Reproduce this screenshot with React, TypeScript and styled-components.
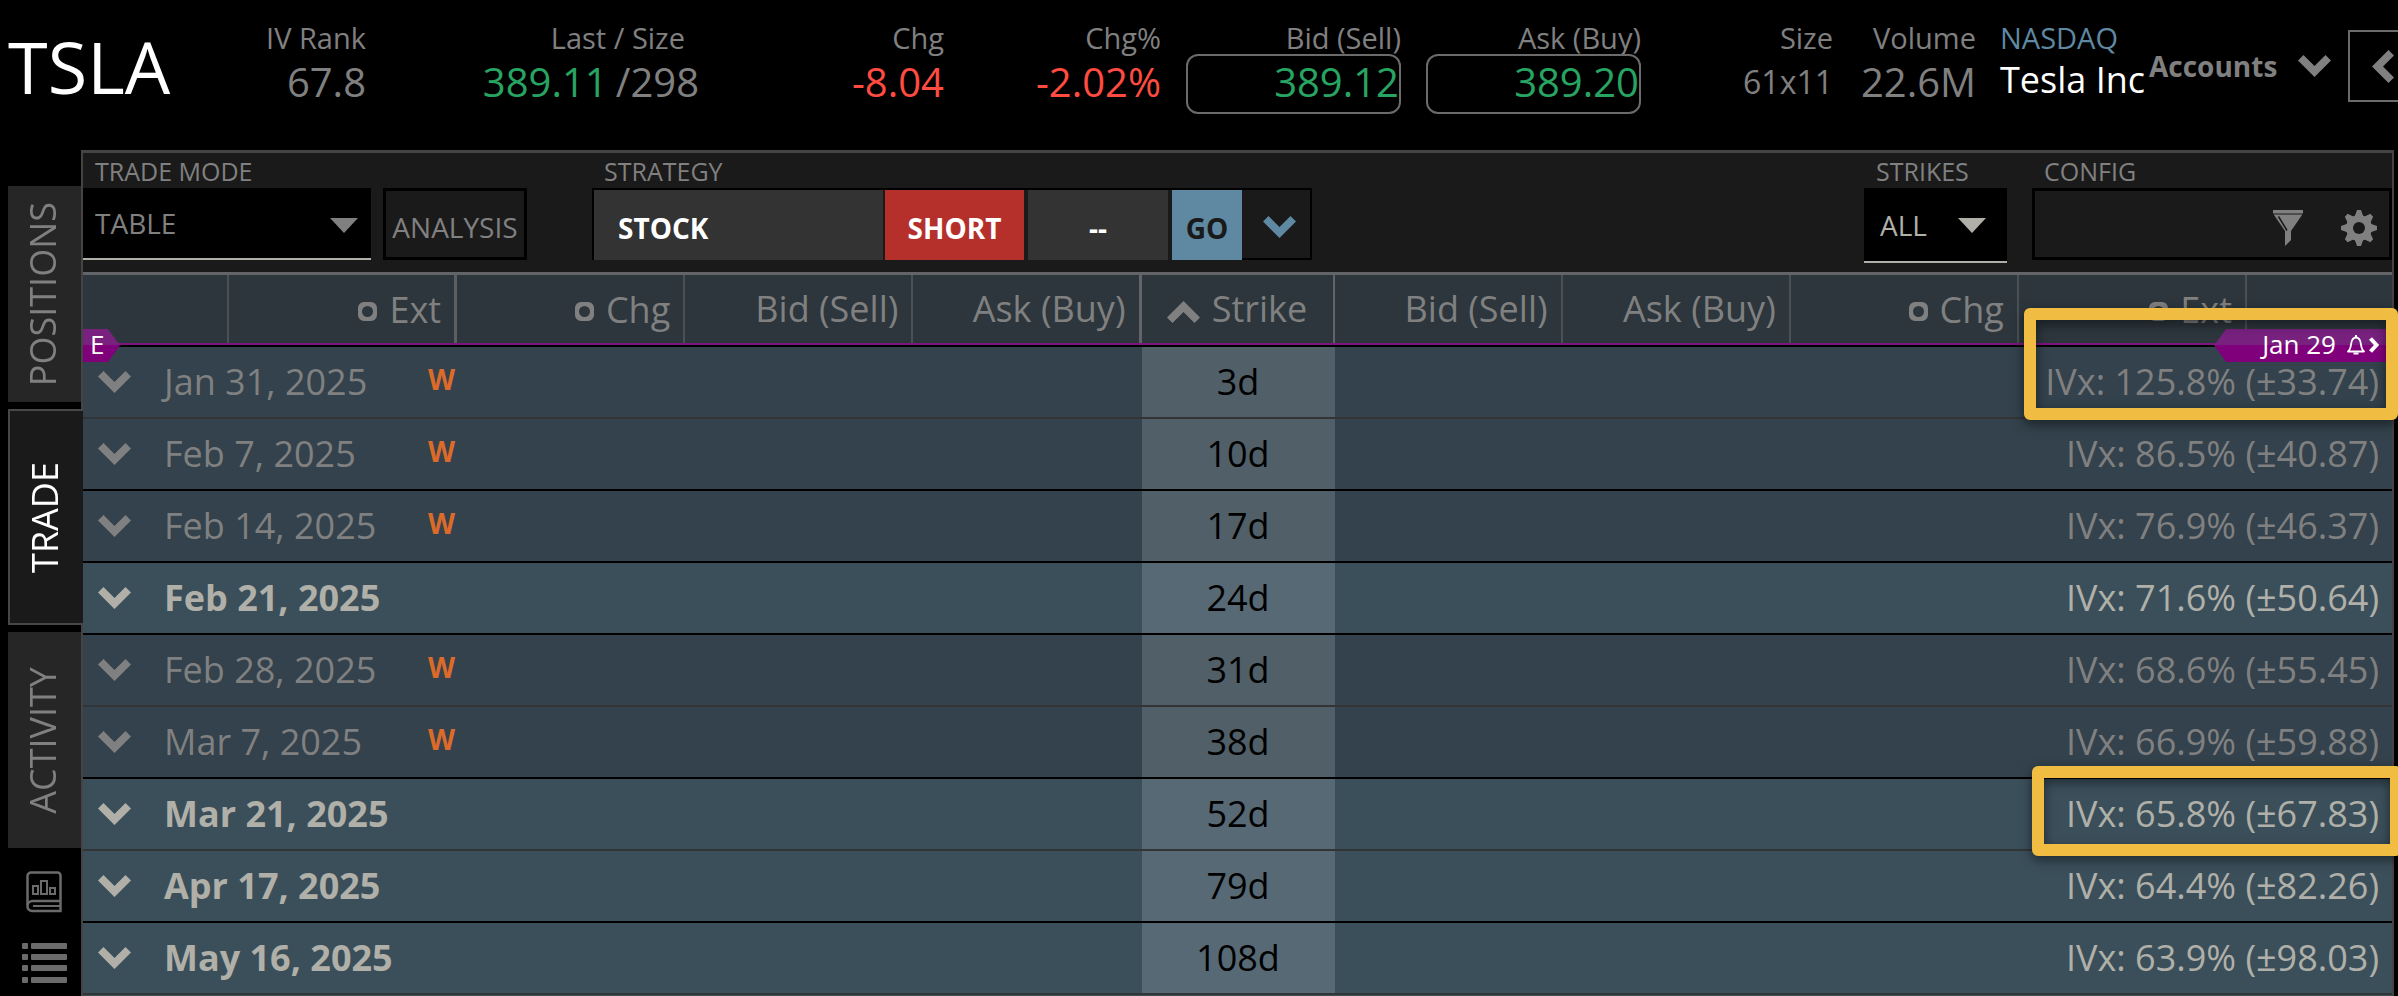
import React from "react";
import styled, { createGlobalStyle, css } from "styled-components";

const GlobalStyle = createGlobalStyle`
  *, *::before, *::after { box-sizing: border-box; }
  body {
    margin: 0;
    background: #000;
    color: #808080;
    font-family: "Open Sans", "Noto Sans", sans-serif;
    overflow: hidden;
  }
  button, select {
    margin: 0;
    padding: 0;
    border: 0;
    border-radius: 0;
    background: none;
    color: inherit;
    font: inherit;
    cursor: pointer;
  }
  svg { display: block; flex: none; }
`;

const GREY = "#808080";
const GREEN = "#28a462";
const RED = "#ff4b40";
const BLUE = "#5f88a2";
const PALE = "#b0b0a9";

/* ---------- page ---------- */

const Page = styled.div`
  display: flex;
  flex-direction: column;
  height: 100vh;
  overflow: hidden;
`;

const Workspace = styled.div`
  display: flex;
  flex: 1;
  min-height: 0;
  padding-right: 4px;
`;

/* ---------- quote header ---------- */

const QuoteBar = styled.header`
  display: grid;
  grid-template-columns: 163fr 195fr 333fr 245fr 217fr 240fr 240fr 192fr 143fr 173fr 199fr 50fr;
  height: 150px;
  padding-left: 8px;
  flex: none;
`;

const Symbol = styled.h1`
  margin: 0;
  padding-top: 17px;
  color: #fff;
  font-size: 72px;
  line-height: 98px;
  font-weight: 400;
`;

const Quote = styled.div<{ $left?: boolean }>`
  display: flex;
  flex-direction: column;
  align-items: ${(p) => (p.$left ? "flex-start" : "flex-end")};
  min-width: 0;
  padding-top: 19px;
  padding-left: ${(p) => (p.$left ? 24 : 0)}px;
  white-space: nowrap;
`;

const QuoteLabel = styled.div<{ $color?: string; $inset?: boolean }>`
  height: 35px;
  padding-right: ${(p) => (p.$inset ? 14 : 0)}px;
  color: ${(p) => p.$color ?? GREY};
  font-size: 29px;
  line-height: 38px;
`;

const QuoteValue = styled.div<{ $color?: string; $size?: number }>`
  display: flex;
  gap: 8px;
  padding-top: 2px;
  color: ${(p) => p.$color ?? GREY};
  font-size: ${(p) => p.$size ?? 40}px;
  line-height: ${(p) => (p.$size === 36 ? 48 : 52)}px;
`;

const Up = styled.span`
  color: ${GREEN};
`;

const PriceButton = styled.button`
  display: flex;
  justify-content: flex-end;
  width: calc(100% - 25px);
  height: 60px;
  border: 2px solid #6b6b6b;
  border-radius: 12px;
  color: ${GREEN};
  font-size: 40px;
  line-height: 52px;
`;

const AccountsButton = styled.button`
  display: flex;
  align-items: center;
  justify-content: space-between;
  min-width: 0;
  height: 72px;
  margin-top: 30px;
  padding: 0 17px 0 0;
  font-size: 28px;
  font-weight: 700;
`;

const CollapseButton = styled.button`
  display: flex;
  align-items: center;
  min-width: 0;
  height: 72px;
  margin-top: 30px;
  padding-left: 22px;
  border: 2px solid #6b6b6b;
  border-right: 0;
  overflow: hidden;
`;

/* ---------- side tabs ---------- */

const Side = styled.nav`
  display: flex;
  flex-direction: column;
  flex: none;
  gap: 7px;
  width: 81px;
  padding: 36px 0 0 8px;
`;

const SideTab = styled.button<{ $active?: boolean }>`
  display: flex;
  align-items: center;
  justify-content: center;
  flex: none;
  height: 216px;
  padding-right: 4px;
  background: #262626;
  font-size: 36px;
  line-height: 48px;
  ${(p) =>
    p.$active &&
    css`
      z-index: 1;
      margin-right: -2px;
      border: 2px solid #474747;
      border-right: 0;
      background: #1a1a1a;
      color: #fff;
    `}
`;

const Upright = styled.span`
  writing-mode: vertical-rl;
  transform: rotate(180deg);
`;

const SideTools = styled.div`
  display: flex;
  flex-direction: column;
  align-items: center;
  gap: 30px;
  padding: 16px 0 0;
  margin-right: 1px;
  color: #6b6b6b;
`;

/* ---------- trade panel ---------- */

const Panel = styled.main`
  display: flex;
  flex-direction: column;
  flex: 1;
  min-width: 0;
  border: 2px solid #444;
  border-top-width: 3px;
  border-bottom: 0;
  background: #3b4f5b;
`;

const Toolbar = styled.div`
  display: flex;
  flex: none;
  height: 119px;
  background: #1a1a1a;
`;

const Field = styled.div<{ $before?: number; $push?: boolean; $width: number }>`
  flex: none;
  width: ${(p) => p.$width}px;
  margin-left: ${(p) => (p.$push ? "auto" : `${p.$before ?? 0}px`)};
`;

const FieldLabel = styled.label`
  display: block;
  height: 35px;
  padding-left: 12px;
  font-size: 25px;
  line-height: 36px;
`;

const SelectBox = styled.div<{ $pale?: boolean }>`
  display: flex;
  position: relative;
  height: ${(p) => (p.$pale ? 75 : 72)}px;
  color: ${(p) => (p.$pale ? PALE : GREY)};

  select {
    appearance: none;
    width: 100%;
    height: 100%;
    padding-left: ${(p) => (p.$pale ? 16 : 12)}px;
    border-bottom: 2px solid ${PALE};
    background: #000;
    font-size: 28px;
  }
  svg {
    position: absolute;
    right: ${(p) => (p.$pale ? 21 : 13)}px;
    top: 30px;
    pointer-events: none;
  }
`;

const FrameButton = styled.button`
  display: flex;
  align-items: center;
  justify-content: center;
  width: 100%;
  height: 72px;
  margin-top: 35px;
  padding-top: 5px;
  border: 3px solid #000;
  font-size: 28px;
`;

const StrategyBox = styled.div`
  display: grid;
  grid-template-columns: 291px 143px 144px 70px 1fr;
  height: 72px;
  border: 2px solid #000;
  border-bottom-width: 0;
`;

const StrategyPart = styled.button<{ $bg?: string; $ink?: string; $start?: boolean; $gap?: number }>`
  display: flex;
  align-items: center;
  justify-content: ${(p) => (p.$start ? "flex-start" : "center")};
  margin-right: ${(p) => p.$gap ?? 0}px;
  padding: ${(p) => (p.$start ? "5px 0 0 24px" : "5px 0 0")};
  background: ${(p) => p.$bg ?? "#333"};
  color: ${(p) => p.$ink ?? "#fff"};
  font-size: 28px;
  font-weight: 700;
`;

const StrategyMore = styled.button`
  display: flex;
  align-items: center;
  justify-content: center;
  padding: 6px 0 0 6px;
  border-bottom: 2px solid #000;
  color: ${BLUE};
`;

const ConfigBox = styled.div`
  display: flex;
  align-items: center;
  justify-content: flex-end;
  gap: 38px;
  height: 72px;
  padding: 8px 12px 0 0;
  border: 3px solid #000;
`;

/* ---------- option chain ---------- */

const Chain = styled.table`
  width: 100%;
  flex: none;
  table-layout: fixed;
  border-collapse: separate;
  border-spacing: 0;
  border-top: 3px solid #626467;
  font-size: 36px;
  line-height: 48px;
`;

const Column = styled.col<{ $width?: number }>`
  width: ${(p) => (p.$width ? `${p.$width}px` : "auto")};
`;

const HeadCell = styled.th<{ $line?: string; $thick?: boolean; $center?: boolean }>`
  position: relative;
  height: 72px;
  padding: 0 13px 4px 0;
  border-right: ${(p) => (p.$thick ? 3 : 2)}px solid ${(p) => p.$line ?? "#4b5054"};
  background: #2c363c;
  font-weight: 400;
  text-align: right;
  white-space: nowrap;
  ${(p) =>
    p.$center &&
    css`
      padding-right: 0;
      text-align: center;
    `}
  &:last-child { border-right: 0; }
  &::after {
    content: "";
    position: absolute;
    left: 0;
    right: -3px;
    bottom: 0;
    height: 4px;
    background: linear-gradient(#7d1580 2px, #000 2px);
  }
  &:last-child::after { right: 0; }
`;

const HeadLabel = styled.span`
  display: inline-flex;
  align-items: center;
  gap: 12px;
`;

const ExpiryRow = styled.tr<{ $monthly?: boolean; $dark?: boolean }>`
  color: ${(p) => (p.$monthly ? PALE : GREY)};
  td {
    position: relative;
    height: 72px;
    padding: 0;
    border-bottom: 2px solid ${(p) => (p.$dark ? "#000" : "#333436")};
    background: ${(p) => (p.$monthly ? "#3b4f5b" : "#33424c")};
  }
  td:nth-child(2) {
    background: ${(p) => (p.$monthly ? "#576974" : "#515f68")};
    color: #000;
    text-align: center;
  }
`;

const Expiry = styled.button<{ $monthly?: boolean }>`
  display: grid;
  grid-template-columns: 66px 264px auto;
  align-items: center;
  width: 100%;
  padding-left: 15px;
  font-weight: ${(p) => (p.$monthly ? 700 : 400)};
  line-height: 48px;
  text-align: left;
`;

const Weekly = styled.span`
  padding-bottom: 6px;
  color: #dc6b2b;
  font-size: 28px;
  font-weight: 700;
  line-height: 36px;
`;

const Volatility = styled.div`
  padding-right: 13px;
  text-align: right;
`;

const Marker = styled.span<{ $right?: boolean }>`
  position: absolute;
  z-index: 2;
  bottom: -15px;
  display: flex;
  align-items: center;
  height: 33px;
  background: linear-gradient(#78217f 16px, #80007b 16px);
  color: #fff;
  font-size: 26px;
  line-height: 31px;
  padding-bottom: 2px;
  ${(p) =>
    p.$right
      ? css`
          right: 0;
          gap: 11px;
          padding-right: 13px;
          padding-left: 48px;
          clip-path: polygon(12px 0, 100% 0, 100% 100%, 12px 100%, 0 50%);
        `
      : css`
          left: 0;
          width: 37px;
          padding-left: 7px;
          clip-path: polygon(0 0, 25px 0, 100% 50%, 25px 100%, 0 100%);
        `}
`;

const MarkerIcons = styled.span`
  display: flex;
  align-items: center;
  gap: 4px;
`;

const Highlight = styled.div<{ $tall?: boolean }>`
  position: absolute;
  z-index: 3;
  top: ${(p) => (p.$tall ? -39 : -13)}px;
  right: ${(p) => (p.$tall ? -6 : -10)}px;
  width: ${(p) => (p.$tall ? 374 : 370)}px;
  height: ${(p) => (p.$tall ? 112 : 90)}px;
  border: 12px solid #f0bc41;
  border-radius: 6px;
  filter: drop-shadow(0 4px 6px rgba(0, 0, 0, 0.5));
  pointer-events: none;
`;

/* ---------- icons ---------- */

const Chevron = () => (
  <svg width="33" height="22" viewBox="0 0 33 22" fill="currentColor" aria-hidden="true">
    <path d="M0 5.5 5.5 0 16.5 11 27.5 0 33 5.5 16.5 22Z" />
  </svg>
);

const SortUp = () => (
  <svg width="33" height="28" viewBox="0 0 33 28" fill="currentColor" aria-hidden="true">
    <path d="M0 22.5 16.5 6 33 22.5 27.5 28 16.5 17 5.5 28Z" />
  </svg>
);

const ChevronLeft = () => (
  <svg width="22" height="33" viewBox="0 0 22 33" fill="currentColor" aria-hidden="true">
    <path d="M16.5 0 22 5.5 11 16.5 22 27.5 16.5 33 0 16.5Z" />
  </svg>
);

const Triangle = () => (
  <svg width="28" height="15" viewBox="0 0 28 15" fill="currentColor" aria-hidden="true">
    <path d="M0 0H28L14 15Z" />
  </svg>
);

const Ring = () => (
  <svg width="19" height="22" viewBox="0 0 19 22" aria-hidden="true">
    <path
      fill={GREY}
      fillRule="evenodd"
      d="M6 3H13a6 6 0 0 1 6 6V16a6 6 0 0 1-6 6H6a6 6 0 0 1-6-6V9a6 6 0 0 1 6-6ZM9.500 7a5.500 5.500 0 1 0 0 11a5.500 5.500 0 0 0 0-11Z"
    />
  </svg>
);

const Funnel = () => (
  <svg width="30" height="36" viewBox="0 0 30 36" fill="currentColor" aria-hidden="true">
    <path d="M0 0H30V3H0Z" />
    <path d="M0 3H30L29 5H1Z" opacity="0.5" />
    <path d="M1 5H29L18 21V30L12 36V21Z" />
    <path d="M5.500 6.500 14 20.500" fill="none" stroke="#1a1a1a" strokeWidth="1.500" />
  </svg>
);

const Gear = () => (
  <svg width="36" height="36" viewBox="-18 -18 36 36" fill="currentColor" aria-hidden="true">
    {[0, 45, 90, 135].map((turn) => (
      <path key={turn} transform={`rotate(${turn})`} d="M-2-18H2L4.500-11V11L2 18H-2L-4.500 11V-11Z" />
    ))}
    <circle r="13" />
    <circle r="6" fill="#1a1a1a" />
  </svg>
);

const Bell = () => (
  <svg width="18" height="20" viewBox="0 0 18 20" fill="none" stroke="currentColor" aria-hidden="true">
    <path d="M1 16.500C4.500 14 3.500 9 5 5.500 6 3.200 7.500 2.500 9 2.500S12 3.200 13 5.500C14.500 9 13.500 14 17 16.500Z" strokeWidth="1.800" strokeLinejoin="round" />
    <path d="M9 0V3M6.500 18.500H11.500" strokeWidth="2" />
  </svg>
);

const SmallChevron = () => (
  <svg width="10" height="16" viewBox="0 0 10 16" fill="none" stroke="currentColor" strokeWidth="4" aria-hidden="true">
    <path d="M1.500 1.500 7.500 8 1.500 14.500" />
  </svg>
);

const ReportBook = () => (
  <svg width="36" height="42" viewBox="0 0 36 42" fill="none" stroke="currentColor" strokeWidth="2.500" aria-hidden="true">
    <path d="M34.500 30V4.500a3 3 0 0 0-3-3H5a3.500 3.500 0 0 0-3.500 3.500V35.500A4.500 4.500 0 0 0 6 40H34.500V30H6.500A5 5 0 0 0 1.500 35" />
    <path d="M34 35H7" strokeWidth="2" />
    <path d="M7 15H12V23H7ZM15 10H21V23H15ZM24 17H29V23H24Z" strokeWidth="2" />
  </svg>
);

const ListLines = () => (
  <svg width="45" height="40" viewBox="0 0 45 40" fill="currentColor" aria-hidden="true">
    {[0, 11, 22, 34].map((y) => (
      <g key={y}>
        <rect x="0" y={y} width="6" height="6" rx="1" />
        <rect x="9" y={y} width="36" height="6" rx="1" />
      </g>
    ))}
  </svg>
);

/* ---------- data ---------- */

type ExpiryData = {
  date: string;
  days: string;
  ivx: string;
  monthly?: boolean;
  dark?: boolean;
  mark?: "tall" | "short";
};

const expiries: ExpiryData[] = [
  { date: "Jan 31, 2025", days: "3d", ivx: "125.8% (±33.74)", mark: "tall" },
  { date: "Feb 7, 2025", days: "10d", ivx: "86.5% (±40.87)", dark: true },
  { date: "Feb 14, 2025", days: "17d", ivx: "76.9% (±46.37)", dark: true },
  { date: "Feb 21, 2025", days: "24d", ivx: "71.6% (±50.64)", monthly: true, dark: true },
  { date: "Feb 28, 2025", days: "31d", ivx: "68.6% (±55.45)" },
  { date: "Mar 7, 2025", days: "38d", ivx: "66.9% (±59.88)", dark: true },
  { date: "Mar 21, 2025", days: "52d", ivx: "65.8% (±67.83)", monthly: true, mark: "short" },
  { date: "Apr 17, 2025", days: "79d", ivx: "64.4% (±82.26)", monthly: true, dark: true },
  { date: "May 16, 2025", days: "108d", ivx: "63.9% (±98.03)", monthly: true },
];

const Ringed = ({ children }: { children: string }) => (
  <HeadLabel>
    <Ring />
    {children}
  </HeadLabel>
);

export default function App() {
  return (
    <Page>
      <GlobalStyle />
      <QuoteBar>
        <Symbol>TSLA</Symbol>
        <Quote>
          <QuoteLabel>IV Rank</QuoteLabel>
          <QuoteValue>67.8</QuoteValue>
        </Quote>
        <Quote>
          <QuoteLabel $inset>Last / Size</QuoteLabel>
          <QuoteValue>
            <Up>389.11</Up>
            <span>/298</span>
          </QuoteValue>
        </Quote>
        <Quote>
          <QuoteLabel>Chg</QuoteLabel>
          <QuoteValue $color={RED}>-8.04</QuoteValue>
        </Quote>
        <Quote>
          <QuoteLabel>Chg%</QuoteLabel>
          <QuoteValue $color={RED}>-2.02%</QuoteValue>
        </Quote>
        <Quote>
          <QuoteLabel>Bid (Sell)</QuoteLabel>
          <PriceButton>389.12</PriceButton>
        </Quote>
        <Quote>
          <QuoteLabel>Ask (Buy)</QuoteLabel>
          <PriceButton>389.20</PriceButton>
        </Quote>
        <Quote>
          <QuoteLabel>Size</QuoteLabel>
          <QuoteValue $size={32}>61x11</QuoteValue>
        </Quote>
        <Quote>
          <QuoteLabel>Volume</QuoteLabel>
          <QuoteValue>22.6M</QuoteValue>
        </Quote>
        <Quote $left>
          <QuoteLabel $color={BLUE}>NASDAQ</QuoteLabel>
          <QuoteValue $color="#fff" $size={36}>Tesla Inc</QuoteValue>
        </Quote>
        <AccountsButton>
          Accounts
          <Chevron />
        </AccountsButton>
        <CollapseButton aria-label="Collapse">
          <ChevronLeft />
        </CollapseButton>
      </QuoteBar>

      <Workspace>
        <Side>
          <SideTab><Upright>POSITIONS</Upright></SideTab>
          <SideTab $active><Upright>TRADE</Upright></SideTab>
          <SideTab><Upright>ACTIVITY</Upright></SideTab>
          <SideTools>
            <button aria-label="Reports"><ReportBook /></button>
            <button aria-label="Lists"><ListLines /></button>
          </SideTools>
        </Side>

        <Panel>
          <Toolbar>
            <Field $width={288}>
              <FieldLabel htmlFor="mode">TRADE MODE</FieldLabel>
              <SelectBox>
                <select id="mode" defaultValue="TABLE">
                  <option>TABLE</option>
                </select>
                <Triangle />
              </SelectBox>
            </Field>
            <Field $width={144} $before={12}>
              <FrameButton>ANALYSIS</FrameButton>
            </Field>
            <Field $width={720} $before={65}>
              <FieldLabel as="div">STRATEGY</FieldLabel>
              <StrategyBox>
                <StrategyPart $start $gap={2}>STOCK</StrategyPart>
                <StrategyPart $bg="#b5302b" $gap={4}>SHORT</StrategyPart>
                <StrategyPart $gap={4}>--</StrategyPart>
                <StrategyPart $bg={BLUE} $ink="#1a1a1a">GO</StrategyPart>
                <StrategyMore aria-label="More strategies"><Chevron /></StrategyMore>
              </StrategyBox>
            </Field>
            <Field $width={143} $push>
              <FieldLabel htmlFor="strikes">STRIKES</FieldLabel>
              <SelectBox $pale>
                <select id="strikes" defaultValue="ALL">
                  <option>ALL</option>
                </select>
                <Triangle />
              </SelectBox>
            </Field>
            <Field $width={360} $before={25}>
              <FieldLabel as="div">CONFIG</FieldLabel>
              <ConfigBox>
                <button aria-label="Filter"><Funnel /></button>
                <button aria-label="Settings"><Gear /></button>
              </ConfigBox>
            </Field>
          </Toolbar>

          <Chain>
            <colgroup>
              <Column $width={146} />
              <Column />
              <Column />
              <Column />
              <Column />
              <Column $width={193} />
              <Column />
              <Column />
              <Column />
              <Column />
              <Column $width={145} />
            </colgroup>
            <thead>
              <tr>
                <HeadCell><Marker>E</Marker></HeadCell>
                <HeadCell $line="#5c5f61" $thick><Ringed>Ext</Ringed></HeadCell>
                <HeadCell><Ringed>Chg</Ringed></HeadCell>
                <HeadCell>Bid (Sell)</HeadCell>
                <HeadCell $line="#626467" $thick>Ask (Buy)</HeadCell>
                <HeadCell $line="#626467" $center>
                  <HeadLabel><SortUp />Strike</HeadLabel>
                </HeadCell>
                <HeadCell>Bid (Sell)</HeadCell>
                <HeadCell>Ask (Buy)</HeadCell>
                <HeadCell><Ringed>Chg</Ringed></HeadCell>
                <HeadCell><Ringed>Ext</Ringed></HeadCell>
                <HeadCell>
                  <Marker $right>
                    Jan 29
                    <MarkerIcons><Bell /><SmallChevron /></MarkerIcons>
                  </Marker>
                </HeadCell>
              </tr>
            </thead>
            <tbody>
              {expiries.map((e) => (
                <ExpiryRow key={e.date} $monthly={e.monthly} $dark={e.dark}>
                  <td colSpan={5}>
                    <Expiry $monthly={e.monthly}>
                      <Chevron />
                      {e.date}
                      {!e.monthly && <Weekly>W</Weekly>}
                    </Expiry>
                  </td>
                  <td>{e.days}</td>
                  <td colSpan={5}>
                    <Volatility>IVx: {e.ivx}</Volatility>
                    {e.mark && <Highlight $tall={e.mark === "tall"} />}
                  </td>
                </ExpiryRow>
              ))}
            </tbody>
          </Chain>
        </Panel>
      </Workspace>
    </Page>
  );
}
